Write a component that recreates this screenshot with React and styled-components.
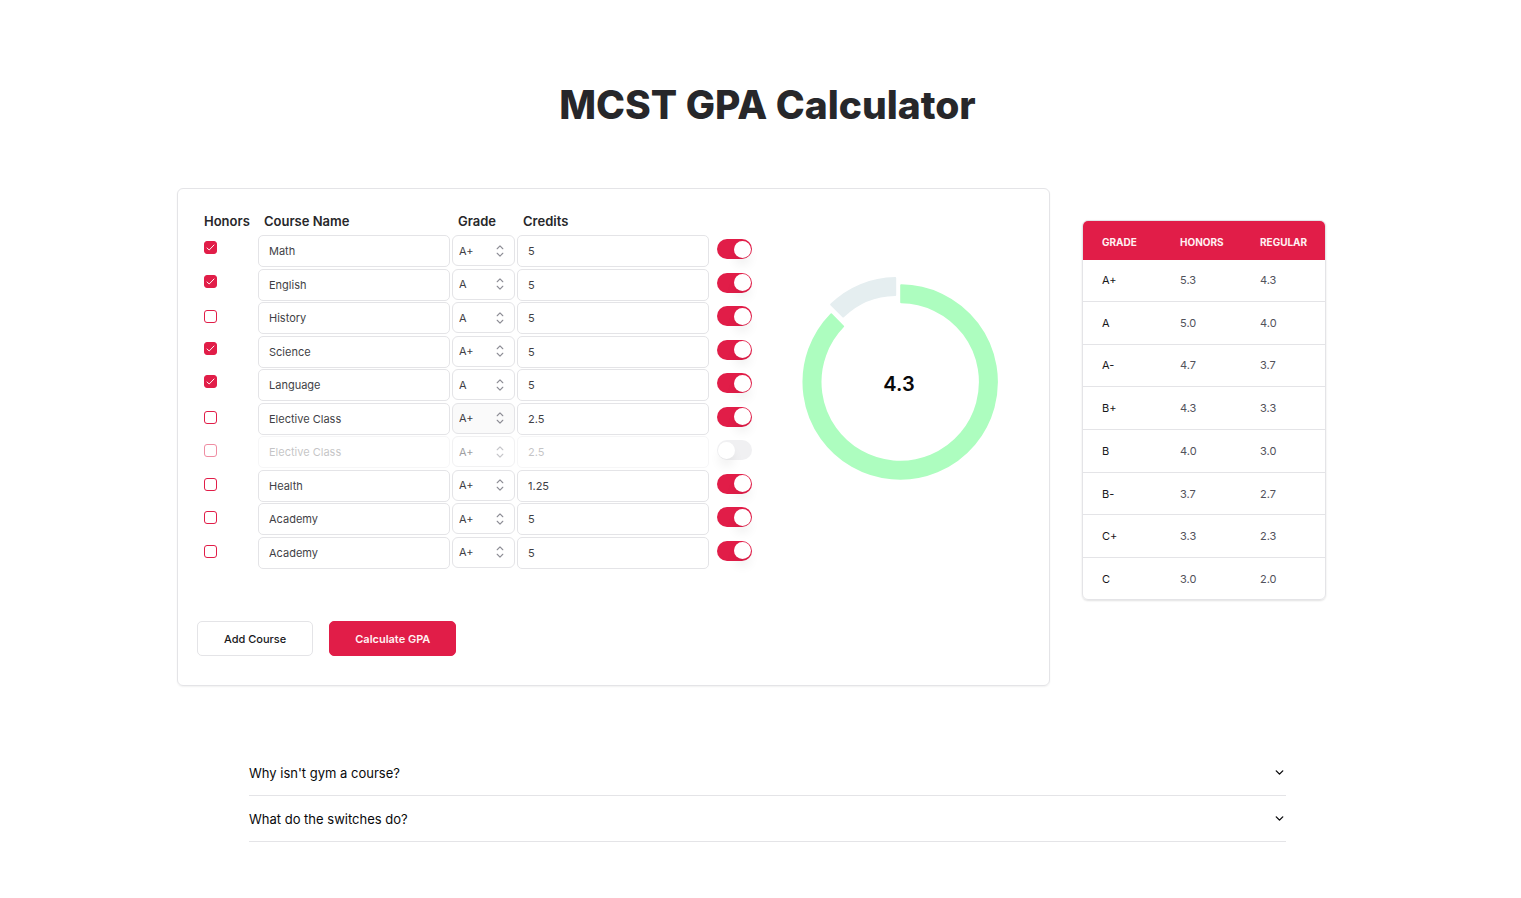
import React, { useState } from "react";
import styled, { createGlobalStyle } from "styled-components";

const rose = "#e11d48";
const line = "#e4e4e7";

const GlobalStyle = createGlobalStyle`
  *, *::before, *::after { box-sizing: border-box; }
  body {
    margin: 0;
    background: #fff;
    color: #27272a;
    font-family: Inter, "Liberation Sans", sans-serif;
    font-size: 12px;
  }
  input, select, button { font: inherit; color: inherit; }
`;

const Page = styled.main`
  display: flex;
  flex-direction: column;
  align-items: center;
  padding: 81px 0 56px 14px;
`;

const Title = styled.h1`
  margin: 0;
  font-size: 39px;
  line-height: 48px;
  font-weight: 800;
`;

const Content = styled.div`
  display: flex;
  align-items: flex-start;
  gap: 32px;
  width: 100%;
  max-width: 1181px;
  margin-top: 59px;
  padding-right: 32px;
`;

const Card = styled.section`
  flex: 1;
  padding: 22px 19px 29px;
  border: 1px solid ${line};
  border-radius: 6px;
  box-shadow: 0 1px 2px rgba(0, 0, 0, 0.06);
`;

const Workspace = styled.div`
  display: flex;
  align-items: flex-start;
  gap: 48px;
`;

const Courses = styled.div`
  padding-left: 7px;
`;

const Headings = styled.div`
  display: grid;
  grid-template-columns: 60px 194px 65px 1fr;
  font-size: 13px;
  line-height: 20px;
  font-weight: 600;
  margin-bottom: 4px;
`;

const CourseList = styled.div`
  display: flex;
  flex-direction: column;
  justify-content: space-between;
  min-height: 334px;
`;

const CourseRow = styled.div`
  display: grid;
  grid-template-columns: 52px 192px 63px 192px 41px;
  column-gap: 2px;
  align-items: start;
`;

const HonorsLabel = styled.label`
  display: grid;
  width: 13px;
  height: 13px;
  margin-top: ${(p) => (p.$checked ? 6 : 8)}px;
  opacity: ${(p) => (p.$muted ? 0.5 : 1)};
  > * { grid-area: 1 / 1; }
  svg { pointer-events: none; place-self: center; }
`;

const HonorsBox = styled.input`
  appearance: none;
  margin: 0;
  width: 13px;
  height: 13px;
  border: 1px solid ${rose};
  border-radius: 3px;
  background: #fff;
  &:checked { background: ${rose}; }
`;

const Field = styled.input`
  width: 100%;
  height: 32px;
  padding: 0 10px;
  border: 1px solid ${line};
  border-radius: 5px;
  background: transparent;
  color: #3f3f46;
  font-size: 11px;
  &:disabled { opacity: 0.3; }
`;

const Picker = styled.div`
  display: grid;
  align-items: center;
  opacity: ${(p) => (p.$muted ? 0.5 : 1)};
  > * { grid-area: 1 / 1; }
  svg { justify-self: end; margin-right: 6px; pointer-events: none; }
`;

const GradeSelect = styled.select`
  appearance: none;
  width: 100%;
  height: 31px;
  padding: 0 20px 0 6px;
  border: 1px solid ${line};
  border-radius: 6px;
  background: ${(p) => (p.$hovered ? "#fafafa" : "#fff")};
  color: #3f3f46;
  font-size: 11px;
  opacity: 1;
`;

const Switch = styled.input`
  appearance: none;
  display: flex;
  align-items: center;
  width: 35px;
  height: 20px;
  margin: 4px 0 0 6px;
  padding: 0 1px;
  border-radius: 10px;
  background: #f0f0f2;
  &::after {
    content: "";
    width: 17px;
    height: 17px;
    border-radius: 50%;
    background: #fff;
    box-shadow: 0 8px 12px -2px rgba(0, 0, 0, 0.09);
  }
  &:checked { background: ${rose}; justify-content: flex-end; }
`;

const Chart = styled.svg`
  display: block;
  margin-top: 61px;
`;

const Score = styled.text`
  font-size: 20px;
  font-weight: 600;
  fill: #09090b;
`;

const Actions = styled.div`
  display: flex;
  gap: 16px;
  margin-top: 52px;
`;

const Button = styled.button`
  height: 35px;
  padding: 0 ${(p) => (p.$primary ? 25 : 26)}px;
  border: 1px solid ${(p) => (p.$primary ? rose : line)};
  border-radius: 5px;
  background: ${(p) => (p.$primary ? rose : "#fff")};
  color: ${(p) => (p.$primary ? "#fff1f2" : "#18181b")};
  font-size: 11px;
  font-weight: ${(p) => (p.$primary ? 600 : 500)};
`;

const ScalePanel = styled.div`
  width: 244px;
  margin-top: 32px;
  overflow: hidden;
  border: 1px solid ${line};
  border-radius: 6px;
  box-shadow: 0 1px 2px rgba(0, 0, 0, 0.12);
`;

const ScaleTable = styled.table`
  width: 100%;
  height: 378px;
  border-collapse: collapse;
  text-align: left;
  font-size: 11px;
  th, td { padding: 0 0 0 19px; }
  td { color: #52525b; }
  thead th {
    height: 39px;
    padding-top: 3px;
    background: ${rose};
    color: #fff1f2;
    font-size: 10px;
    font-weight: 700;
    text-transform: uppercase;
  }
  tbody th { color: #18181b; font-weight: 400; }
  tbody tr + tr { border-top: 1px solid ${line}; }
`;

const Faq = styled.section`
  width: 100%;
  max-width: 1037px;
  margin-top: 64px;
`;

const Question = styled.button`
  display: flex;
  align-items: center;
  justify-content: space-between;
  width: 100%;
  height: 46px;
  padding: 0;
  border: 0;
  border-bottom: 1px solid ${line};
  background: none;
  color: #09090b;
  font-size: 13px;
  font-weight: 400;
`;

const grades = ["A+", "A", "A-", "B+", "B", "B-", "C+", "C"];

const scale = [
  ["A+", "5.3", "4.3"],
  ["A", "5.0", "4.0"],
  ["A-", "4.7", "3.7"],
  ["B+", "4.3", "3.3"],
  ["B", "4.0", "3.0"],
  ["B-", "3.7", "2.7"],
  ["C+", "3.3", "2.3"],
  ["C", "3.0", "2.0"],
];

const initialCourses = [
  { name: "Math", grade: "A+", credits: "5", honors: true, on: true },
  { name: "English", grade: "A", credits: "5", honors: true, on: true },
  { name: "History", grade: "A", credits: "5", honors: false, on: true },
  { name: "Science", grade: "A+", credits: "5", honors: true, on: true },
  { name: "Language", grade: "A", credits: "5", honors: true, on: true },
  { name: "Elective Class", grade: "A+", credits: "2.5", honors: false, on: true, hovered: true },
  { name: "Elective Class", grade: "A+", credits: "2.5", honors: false, on: false },
  { name: "Health", grade: "A+", credits: "1.25", honors: false, on: true },
  { name: "Academy", grade: "A+", credits: "5", honors: false, on: true },
  { name: "Academy", grade: "A+", credits: "5", honors: false, on: true },
];

// Ring segment from angle `from` to `to` (degrees clockwise from the top),
// pulled in by one unit so that a rounded stroke softens its corners.
function segment(cx, cy, inner, outer, from, to) {
  const ro = outer - 1;
  const ri = inner + 1;
  const point = (r, deg, side) => {
    const a = (deg * Math.PI) / 180 + side * Math.asin(1 / r);
    return `${(cx + r * Math.sin(a)).toFixed(2)} ${(cy - r * Math.cos(a)).toFixed(2)}`;
  };
  const large = to - from > 180 ? 1 : 0;
  return [
    `M${point(ro, from, 1)}`,
    `A${ro} ${ro} 0 ${large} 1 ${point(ro, to, -1)}`,
    `L${point(ri, to, -1)}`,
    `A${ri} ${ri} 0 ${large} 0 ${point(ri, from, 1)}Z`,
  ].join("");
}

function GpaChart() {
  return (
    <Chart width="200" height="212" viewBox="0 0 200 212" role="img" aria-label="GPA 4.3">
      <g strokeWidth="2" strokeLinejoin="round">
        <path d={segment(100.2, 110, 78.7, 97.7, 0, 315)} fill="#adfdbf" stroke="#adfdbf" />
        <path d={segment(96.2, 99, 75, 94, 315, 360)} fill="#e5eef0" stroke="#e5eef0" />
      </g>
      <Score x="99" y="119" textAnchor="middle">4.3</Score>
    </Chart>
  );
}

function Course({ course, onChange }) {
  const { name, grade, credits, honors, on, hovered } = course;
  const set = (key) => (e) =>
    onChange({ ...course, [key]: e.target.type === "checkbox" ? e.target.checked : e.target.value });
  return (
    <CourseRow>
      <HonorsLabel $checked={honors} $muted={!on}>
        <HonorsBox type="checkbox" aria-label="Honors" checked={honors} disabled={!on} onChange={set("honors")} />
        {honors && (
          <svg width="11" height="11" viewBox="0 0 11 11" fill="none" stroke="#fff1f2" strokeWidth="1" strokeLinecap="round" strokeLinejoin="round">
            <path d="M2 6 4.2 8 9 3" />
          </svg>
        )}
      </HonorsLabel>
      <Field aria-label="Course name" value={name} disabled={!on} onChange={set("name")} />
      <Picker $muted={!on}>
        <GradeSelect aria-label="Grade" value={grade} disabled={!on} $hovered={hovered} onChange={set("grade")}>
          {grades.map((g) => <option key={g}>{g}</option>)}
        </GradeSelect>
        <svg width="18" height="18" viewBox="0 0 24 24" fill="none" stroke="#8e8e96" strokeWidth="1.5" strokeLinecap="round" strokeLinejoin="round">
          <path d="M8.25 15 12 18.75 15.75 15m-7.5-6L12 5.25 15.75 9" />
        </svg>
      </Picker>
      <Field aria-label="Credits" value={credits} disabled={!on} onChange={set("credits")} />
      <Switch type="checkbox" role="switch" aria-label="Include course" checked={on} onChange={set("on")} />
    </CourseRow>
  );
}

function FaqItem({ children }) {
  return (
    <Question type="button" aria-expanded="false">
      {children}
      <svg width="13" height="13" viewBox="0 0 24 24" fill="none" stroke="currentColor" strokeWidth="2.5" strokeLinecap="round" strokeLinejoin="round">
        <path d="m6 9 6 6 6-6" />
      </svg>
    </Question>
  );
}

export default function App() {
  const [courses, setCourses] = useState(initialCourses);
  const update = (index) => (next) => setCourses(courses.map((c, i) => (i === index ? next : c)));
  const add = () =>
    setCourses([...courses, { name: "", grade: "A+", credits: "5", honors: false, on: true }]);

  return (
    <Page>
      <GlobalStyle />
      <Title>MCST GPA Calculator</Title>
      <Content>
        <Card>
          <Workspace>
            <Courses>
              <Headings>
                <span>Honors</span>
                <span>Course Name</span>
                <span>Grade</span>
                <span>Credits</span>
              </Headings>
              <CourseList>
                {courses.map((c, i) => <Course key={i} course={c} onChange={update(i)} />)}
              </CourseList>
            </Courses>
            <GpaChart />
          </Workspace>
          <Actions>
            <Button type="button" onClick={add}>Add Course</Button>
            <Button type="button" $primary>Calculate GPA</Button>
          </Actions>
        </Card>
        <ScalePanel>
          <ScaleTable>
            <colgroup>
              <col width="78" />
              <col width="80" />
              <col />
            </colgroup>
            <thead>
              <tr>
                <th scope="col">Grade</th>
                <th scope="col">Honors</th>
                <th scope="col">Regular</th>
              </tr>
            </thead>
            <tbody>
              {scale.map(([grade, honors, regular]) => (
                <tr key={grade}>
                  <th scope="row">{grade}</th>
                  <td>{honors}</td>
                  <td>{regular}</td>
                </tr>
              ))}
            </tbody>
          </ScaleTable>
        </ScalePanel>
      </Content>
      <Faq>
        <FaqItem>Why isn't gym a course?</FaqItem>
        <FaqItem>What do the switches do?</FaqItem>
      </Faq>
    </Page>
  );
}
